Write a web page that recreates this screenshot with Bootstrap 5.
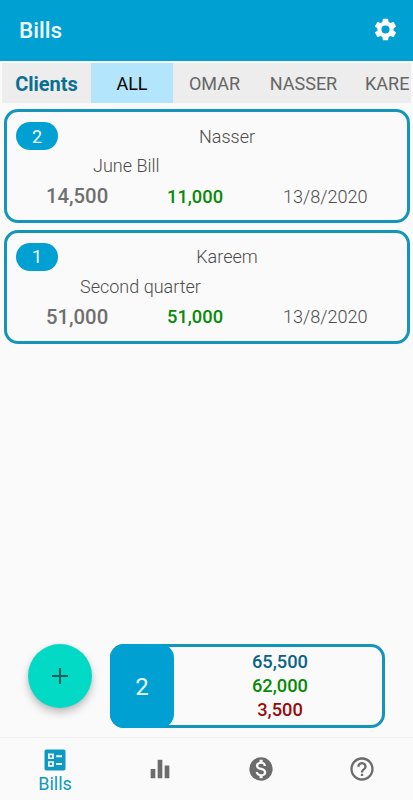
<!DOCTYPE html>
<html lang="en">
<head>
<meta charset="utf-8">
<meta name="viewport" content="width=device-width, initial-scale=1">
<title>Bills</title>
<link href="https://cdn.jsdelivr.net/npm/bootstrap@5.3.0/dist/css/bootstrap.min.css" rel="stylesheet">
<style>
body{font-family:Roboto,sans-serif;background:#fafafa;color:#6f6f6f;font-size:18px;line-height:24px}
.app{height:800px;overflow:hidden}
.topbar{height:61px;background:#00a0d2;padding:0 14px 2px 19px}
.topbar h1{font-size:22.5px;font-weight:500;line-height:28px;color:#effcff;padding-top:1px}
.tabs{height:40px;margin:2px 2px 0;background:#ededed}
.tabs .tab{border:0;border-radius:0;padding:2px 0 0;font-size:18px;line-height:24px;color:#666;flex:none}
.tabs .clients{width:89px;font-size:20px;font-weight:700;color:#0b6f92;padding-top:1px}
.tabs .active{width:82px;background:#b3e5fc;color:#000}
.tabs .tab-omar{width:83px}
.tabs .tab-nasser{width:95px}
.tabs .tab-kareem{width:60px;padding-left:14px}
.bill{margin:6px 3px 0 3.5px;height:114px;border:3px solid #1496bb;border-radius:14px;background:#fafafa;padding:10px 9.5px 0}
.bill+.bill{margin-top:6.5px}
.bill .line{height:28px}
.bill .count{width:42px;height:28px;border-radius:14px;background:#00a0d2;color:#effcff;font-weight:400;font-size:18px;padding:1px 0 0}
.light{font-weight:300;color:#4c4c4c}
.name{width:128px;margin-left:105px;padding-top:1px}
.desc{height:30px;line-height:31px}
.desc-june{padding-left:77px}
.desc-second{padding-left:64px}
.sums{height:32px}
.total{width:63px;margin-left:30px;font-size:20.3px;font-weight:500}
.paid{width:57px;margin-left:58px;font-weight:500;font-size:18.3px;color:#078a07;padding-top:1px}
.date{width:86px;margin-left:59px;font-size:18.1px;padding-top:1px}
.footer-row{height:84px;padding:0 28px;margin-bottom:9px}
.fab{width:64px;height:64px;background:#03dac5;border:0;padding:0;box-shadow:0 5px 8px rgba(0,0,0,.22),0 1px 4px rgba(0,0,0,.08)}
.summary{width:275px;height:84px;margin-left:18px;border:3px solid #1496bb;border-radius:14px}
.summary .qty{width:64px;height:84px;margin:-3px 0 -3px -3px;background:#00a0d2;border-radius:14px;color:#effcff;font-size:24px;padding-top:2px}
.summary .amounts{font-weight:500;font-size:18.3px;line-height:24px;padding-left:4px}
.blue{color:#0b6488}.green{color:#078a07}.red{color:#960b0b}
.bottom{height:63px;border-top:1px solid #f0f0f0;padding:0 0 0 4px}
.bottom .item{width:101px;color:#6c6c6c;flex:none}
.bottom .item+.item{padding-left:7px}
.bottom .current{width:102px;color:#0e99c2;padding-top:8px}
.bottom .current span{line-height:20px}
svg{display:block}
</style>
<script src="https://cdn.jsdelivr.net/npm/bootstrap@5.3.0/dist/js/bootstrap.bundle.min.js"></script>
</head>
<body>
<div class="app d-flex flex-column">
  <header class="topbar d-flex align-items-center justify-content-between">
    <h1 class="m-0">Bills</h1>
    <svg width="27" height="27" viewBox="0 0 24 24" fill="#fff" aria-label="Settings"><path d="M19.14 12.94c.04-.3.06-.61.06-.94 0-.32-.02-.64-.07-.94l2.03-1.58c.18-.14.23-.41.12-.61l-1.92-3.32c-.12-.22-.37-.29-.59-.22l-2.39.96c-.5-.38-1.03-.7-1.62-.94l-.36-2.54c-.04-.24-.24-.41-.48-.41h-3.84c-.24 0-.43.17-.47.41l-.36 2.54c-.59.24-1.13.57-1.62.94l-2.39-.96c-.22-.08-.47 0-.59.22L2.74 8.87c-.12.21-.08.47.12.61l2.03 1.58c-.05.3-.09.63-.09.94s.02.64.07.94l-2.03 1.58c-.18.14-.23.41-.12.61l1.92 3.32c.12.22.37.29.59.22l2.39-.96c.5.38 1.03.7 1.62.94l.36 2.54c.05.24.24.41.48.41h3.84c.24 0 .44-.17.47-.41l.36-2.54c.59-.24 1.13-.56 1.62-.94l2.39.96c.22.08.47 0 .59-.22l1.92-3.32c.12-.22.07-.47-.12-.61l-2.01-1.58zM12 15.6A3.6 3.6 0 1 1 12 8.4a3.6 3.6 0 0 1 0 7.2z"/></svg>
  </header>
  <nav class="tabs d-flex overflow-hidden">
    <div class="tab clients d-flex align-items-center justify-content-center">Clients</div>
    <button class="tab active">ALL</button>
    <button class="tab tab-omar bg-transparent">OMAR</button>
    <button class="tab tab-nasser bg-transparent">NASSER</button>
    <button class="tab tab-kareem bg-transparent text-start text-nowrap">KARE</button>
  </nav>
  <main class="flex-grow-1">
    <section class="bill">
      <div class="line d-flex align-items-center"><span class="count badge d-flex align-items-center justify-content-center">2</span><span class="name light text-center">Nasser</span></div>
      <div class="desc desc-june light">June Bill</div>
      <div class="sums d-flex align-items-center text-nowrap"><span class="total">14,500</span><span class="paid">11,000</span><span class="date light">13/8/2020</span></div>
    </section>
    <section class="bill">
      <div class="line d-flex align-items-center"><span class="count badge d-flex align-items-center justify-content-center">1</span><span class="name light text-center">Kareem</span></div>
      <div class="desc desc-second light">Second quarter</div>
      <div class="sums d-flex align-items-center text-nowrap"><span class="total">51,000</span><span class="paid">51,000</span><span class="date light">13/8/2020</span></div>
    </section>
  </main>
  <div class="footer-row d-flex align-items-start">
    <button class="fab rounded-circle d-flex align-items-center justify-content-center" aria-label="Add"><svg width="18" height="18" viewBox="0 0 18 18" stroke="#075f57" stroke-width="2"><path d="M1 9h16M9 1v16"/></svg></button>
    <div class="summary d-flex">
      <div class="qty d-flex align-items-center justify-content-center">2</div>
      <div class="amounts flex-grow-1 d-flex flex-column justify-content-center text-center">
        <span class="blue">65,500</span><span class="green">62,000</span><span class="red">3,500</span>
      </div>
    </div>
  </div>
  <nav class="bottom d-flex">
    <div class="item current d-flex flex-column align-items-center">
      <svg width="28" height="28" viewBox="0 0 24 24" fill="currentColor"><path fill-rule="evenodd" d="M4.500 3h15A1.500 1.500 0 0 1 21 4.500v15a1.500 1.500 0 0 1-1.500 1.500h-15A1.500 1.500 0 0 1 3 19.500v-15A1.500 1.500 0 0 1 4.500 3zM6 6.500V11.200h5V6.500zM7.500 7.900h2v1.900h-2zM6 13v4.700h5V13zM7.500 14.400h2v1.900h-2zM13 8v1.700h5V8zM13 14.500v1.700h5v-1.700z"/></svg>
      <span>Bills</span>
    </div>
    <div class="item d-flex align-items-center justify-content-center"><svg width="28" height="28" viewBox="0 0 24 24" fill="currentColor"><path d="M4 12h4v8H4zM10 4h4v16h-4zM16 9h4v11h-4z"/></svg></div>
    <div class="item d-flex align-items-center justify-content-center"><svg width="28" height="28" viewBox="0 0 24 24"><circle cx="12" cy="12" r="10" fill="currentColor"/><path d="M13.410 18.090V20h-2.670v-1.930c-1.710-.36-3.160-1.460-3.270-3.400h1.960c.1 1.050.82 1.870 2.650 1.870 1.960 0 2.400-.98 2.400-1.590 0-.83-.44-1.610-2.670-2.140-2.480-.6-4.180-1.620-4.180-3.670 0-1.720 1.390-2.840 3.110-3.210V4h2.670v1.950c1.860.45 2.790 1.860 2.850 3.390H14.300c-.05-1.110-.64-1.870-2.220-1.870-1.500 0-2.400.68-2.400 1.640 0 .84.65 1.390 2.670 1.910s4.180 1.390 4.180 3.910c-.01 1.830-1.380 2.830-3.120 3.160z" fill="#fafafa"/></svg></div>
    <div class="item d-flex align-items-center justify-content-center"><svg width="28" height="28" viewBox="0 0 24 24" fill="currentColor"><path d="M11 18h2v-2h-2v2zm1-16C6.480 2 2 6.480 2 12s4.480 10 10 10 10-4.480 10-10S17.520 2 12 2zm0 18c-4.410 0-8-3.590-8-8s3.590-8 8-8 8 3.590 8 8-3.590 8-8 8zm0-14c-2.210 0-4 1.790-4 4h2c0-1.100.9-2 2-2s2 .9 2 2c0 2-3 1.750-3 5h2c0-2.250 3-2.500 3-5 0-2.210-1.790-4-4-4z"/></svg></div>
  </nav>
</div>
</body>
</html>
